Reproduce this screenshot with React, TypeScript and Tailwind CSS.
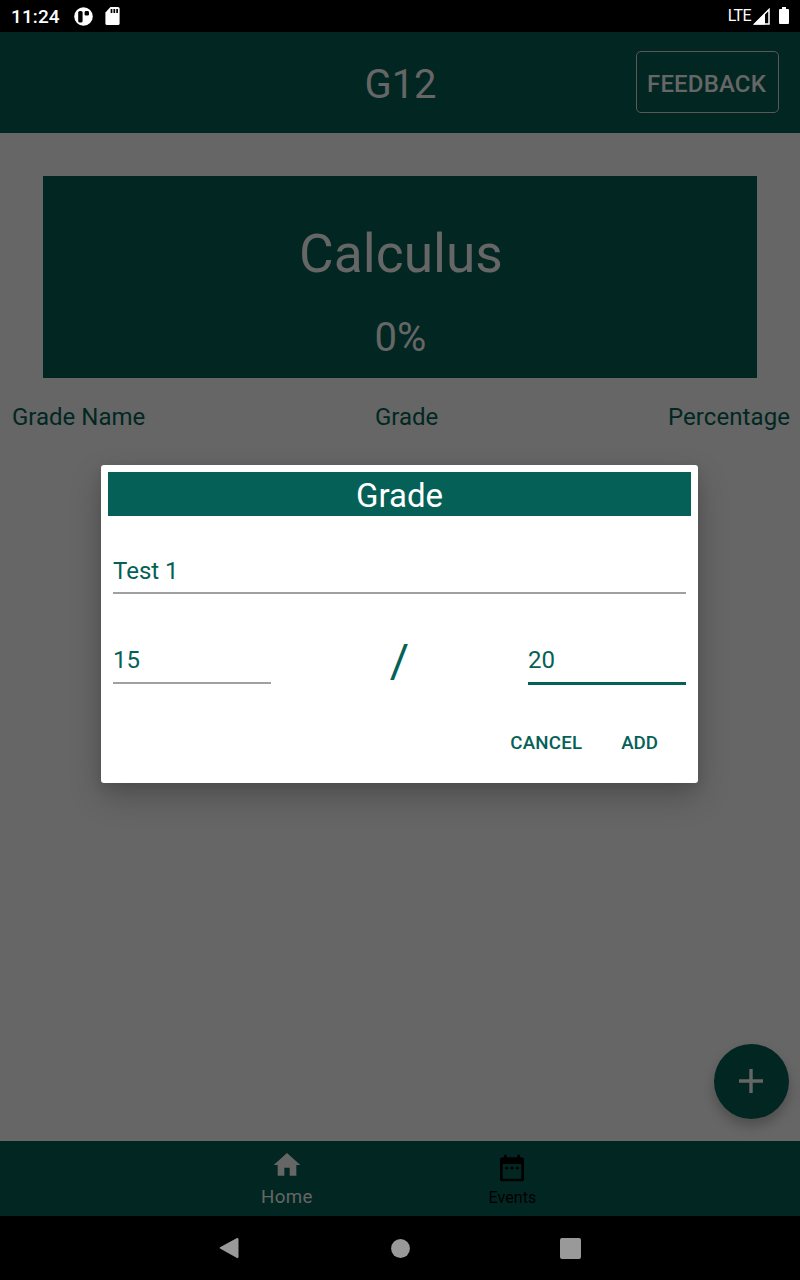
import type { ReactNode } from "react";

function StatusBar() {
  return (
    <div className="flex h-8 shrink-0 items-center bg-black px-[11px] text-white">
      <span className="text-[19px] leading-none font-medium tracking-[0.1px]">11:24</span>
      <svg className="ml-[14px]" width="19" height="19" viewBox="0 0 19 19">
        <circle cx="9.5" cy="9.5" r="9.3" fill="#fff" />
        <rect x="4.2" y="4" width="4.4" height="11.5" rx="1.6" fill="#000" />
        <rect x="10.6" y="4" width="4.4" height="4.6" rx="1.4" fill="#000" />
      </svg>
      <svg className="ml-[12px]" width="15" height="18" viewBox="0 0 15 18">
        <path d="M5.5 0H13a1.6 1.6 0 0 1 1.6 1.6v14.8A1.6 1.6 0 0 1 13 18H2a1.6 1.6 0 0 1-1.6-1.6V5.5z" fill="#fff" />
        <path d="M6.5 2v4M9.3 2v4M12.1 2v4" stroke="#000" strokeWidth="1.7" />
      </svg>
      <span className="ml-auto translate-x-px text-[16px] leading-none tracking-[-0.6px]">LTE</span>
      <svg className="ml-[3px]" width="17" height="17" viewBox="0 0 17 17">
        <path d="M16 1.5V16H1.5z" fill="none" stroke="#fff" strokeWidth="1.5" />
        <path d="M12 5v11.5H1z" fill="#fff" />
      </svg>
      <svg className="ml-[9px]" width="10" height="18" viewBox="0 0 10 18">
        <path d="M3 0h4v2h2a1 1 0 0 1 1 1v13a1 1 0 0 1-1 1H1a1 1 0 0 1-1-1V3a1 1 0 0 1 1-1h2z" fill="#fff" />
      </svg>
    </div>
  );
}

function Field({ value, className }: { value: ReactNode; className: string }) {
  return <div className={className}>{value}</div>;
}

function GradeDialog() {
  return (
    <div className="absolute top-[465px] left-[101px] flex h-[318px] w-[597px] flex-col rounded-[3px] bg-white px-[7px] pt-[7px] text-[#056157] shadow-[0_14px_32px_rgba(0,0,0,0.22),0_4px_12px_rgba(0,0,0,0.1)]">
      <h3 className="h-11 bg-[#056157] text-center text-[33px] leading-[47px] text-white">Grade</h3>
      <div className="flex flex-col px-[5px]">
        <Field
          value="Test 1"
          className="mt-[39px] h-[39px] border-b-2 border-[#a0a0a0] text-[24px] leading-[32px]"
        />
        <div className="mt-[50px] flex items-start justify-between">
          <Field value="15" className="h-[40px] w-[158px] border-b-2 border-[#a0a0a0] text-[24px] leading-[32px]" />
          <span className="text-[47px] leading-[33px]">/</span>
          <Field value="20" className="h-[41px] w-[158px] border-b-[3px] border-[#056157] text-[24px] leading-[32px]" />
        </div>
        <div className="mt-[46px] flex justify-end gap-[39px] pr-[28px] text-[18.7px] leading-6 font-medium">
          <button className="tracking-[0.2px]">CANCEL</button>
          <button>ADD</button>
        </div>
      </div>
    </div>
  );
}

export default function App() {
  return (
    <div className="relative h-[1280px] w-[800px] overflow-hidden bg-[#666666] font-['Roboto',sans-serif]">
      <div className="flex h-full flex-col">
        <StatusBar />
        <header className="grid h-[101px] shrink-0 grid-cols-[1fr_auto_1fr] items-center bg-[#022722] px-[21px] text-[#666]">
          <span />
          <h1 className="pt-[5px] pl-px text-[40px]">G12</h1>
          <button className="mb-px h-[62px] w-[143px] justify-self-end rounded-[5px] border border-[#5c5656] pt-[3px] pr-[2px] text-[24px] font-medium">
            <span className="-mx-1 tracking-[0.15px]">FEEDBACK</span>
          </button>
        </header>
        <main className="flex flex-1 flex-col pt-[43px]">
          <section className="mx-[43px] flex h-[202px] flex-col items-center bg-[#022722] text-[#666]">
            <h2 className="mt-[44px] pl-[2px] text-[53.3px] leading-[68px]">Calculus</h2>
            <p className="mt-[25px] pl-px text-[40px] leading-[50px]">0%</p>
          </section>
          <div className="mt-[24px] flex justify-between pr-[10px] pl-[12px] text-[24px] leading-[30px] text-[#022722]">
            <span>Grade Name</span>
            <span>Grade</span>
            <span className="tracking-[0.07px]">Percentage</span>
          </div>
        </main>
        <nav className="flex h-[75px] shrink-0 justify-center bg-[#022722] pr-[1px]">
          <div className="flex w-[225px] flex-col items-center text-[#666]">
            <svg className="mt-[8px]" width="32" height="32" viewBox="0 0 24 24" fill="currentColor">
              <path d="M10 20v-6h4v6h5v-8h3L12 3 2 12h3v8z" />
            </svg>
            <span className="mt-[4px] text-[18.7px] leading-[24px] tracking-[0.4px]">Home</span>
          </div>
          <div className="flex w-[225px] flex-col items-center text-black">
            <svg className="mt-[11px]" width="32" height="32" viewBox="0 0 24 24" fill="currentColor">
              <path d="M9 11H7v2h2zm4 0h-2v2h2zm4 0h-2v2h2zm2-7h-1V2h-2v2H8V2H6v2H5a2 2 0 0 0-2 2v14a2 2 0 0 0 2 2h14a2 2 0 0 0 2-2V6a2 2 0 0 0-2-2zm0 16H5V9h14z" />
            </svg>
            <span className="mt-[3px] pl-px text-[16px] leading-[22px] tracking-[0.1px]">Events</span>
          </div>
        </nav>
        <div className="flex h-16 shrink-0 items-center bg-black pl-[219px]">
          <svg width="20" height="22" viewBox="0 0 20 22" fill="#999">
            <path d="M18 1.1 1 10.2q-1 .7 0 1.4L18 21q1.4.5 1.5-1V2q-.2-1.3-1.5-.9z" />
          </svg>
          <svg className="ml-[152px]" width="19" height="19" viewBox="0 0 19 19" fill="#999">
            <circle cx="9.5" cy="9.5" r="9.4" />
          </svg>
          <span className="ml-[150px] h-[21px] w-[21px] rounded-[2px] bg-[#999]" />
        </div>
      </div>
      <button className="absolute top-[1044px] left-[714px] flex h-[75px] w-[75px] items-center justify-center rounded-full bg-[#022722] pr-[2px] pb-[2px] shadow-[0_7px_12px_rgba(0,0,0,0.24)]">
        <svg width="24" height="24" viewBox="0 0 24 24" stroke="#666" strokeWidth="3.4">
          <path d="M12 0v24M0 12h24" />
        </svg>
      </button>
      <GradeDialog />
    </div>
  );
}
